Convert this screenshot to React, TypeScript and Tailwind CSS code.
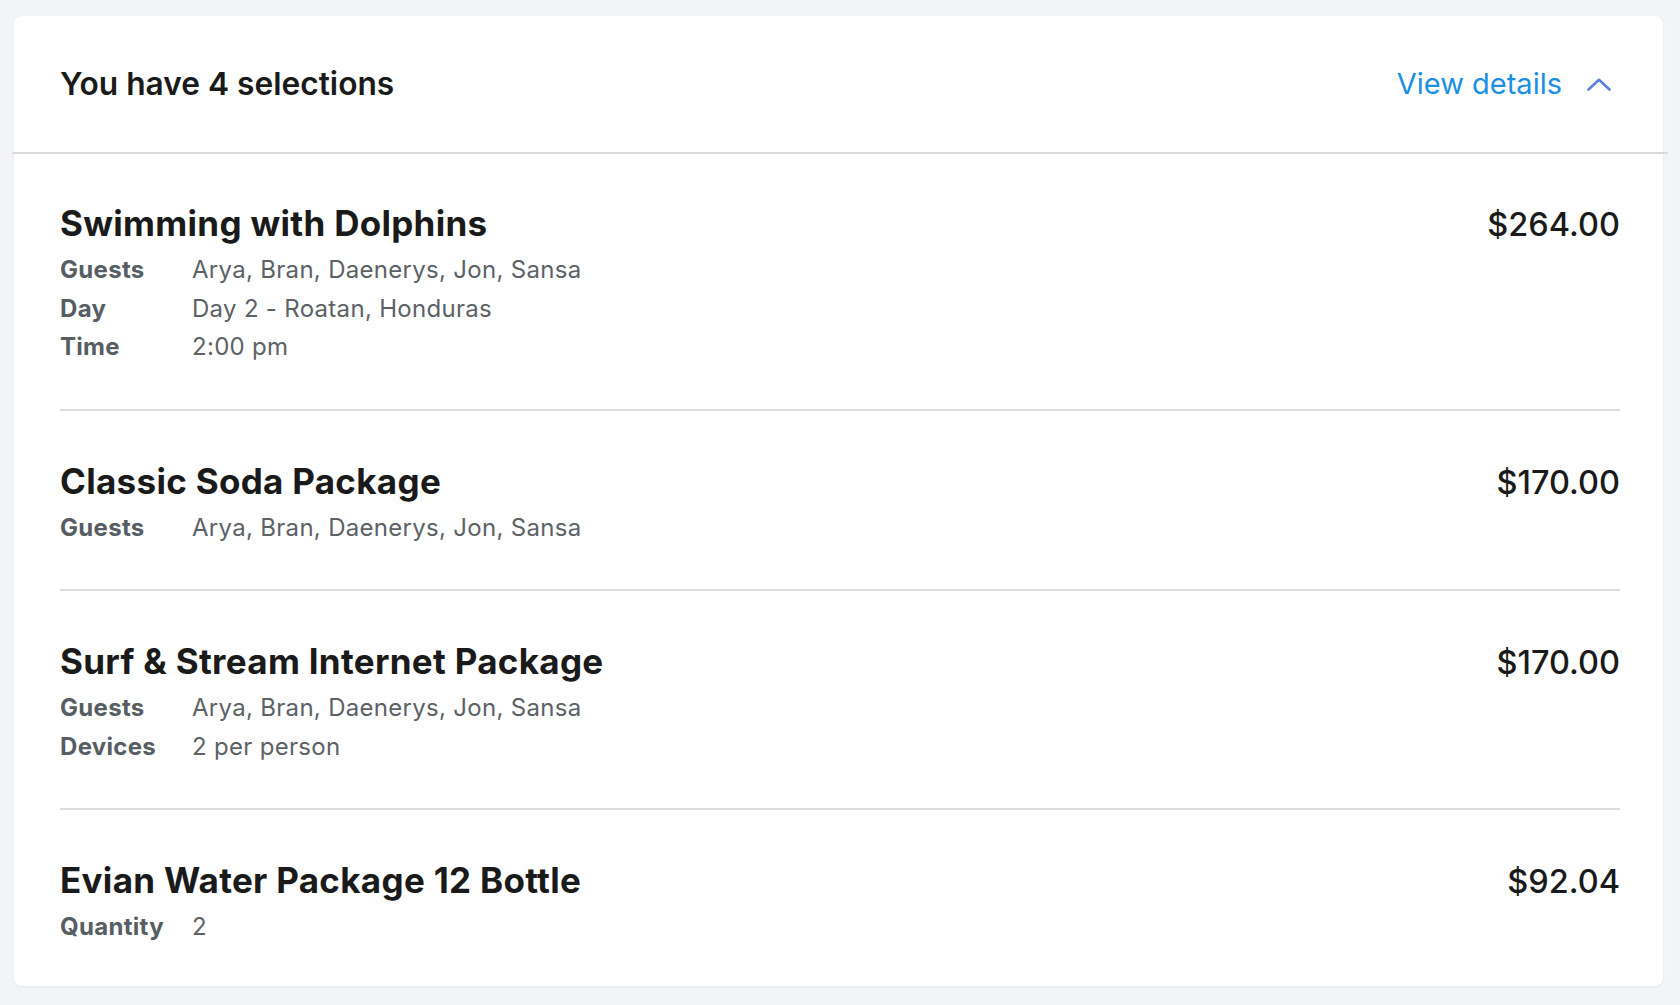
import React from "react";

type Row = { label: string; value: string };
type Item = { title: string; price: string; rows: Row[] };

const items: Item[] = [
  {
    title: "Swimming with Dolphins",
    price: "$264.00",
    rows: [
      { label: "Guests", value: "Arya, Bran, Daenerys, Jon, Sansa" },
      { label: "Day", value: "Day 2 - Roatan, Honduras" },
      { label: "Time", value: "2:00 pm" },
    ],
  },
  {
    title: "Classic Soda Package",
    price: "$170.00",
    rows: [{ label: "Guests", value: "Arya, Bran, Daenerys, Jon, Sansa" }],
  },
  {
    title: "Surf & Stream Internet Package",
    price: "$170.00",
    rows: [
      { label: "Guests", value: "Arya, Bran, Daenerys, Jon, Sansa" },
      { label: "Devices", value: "2 per person" },
    ],
  },
  {
    title: "Evian Water Package 12 Bottle",
    price: "$92.04",
    rows: [{ label: "Quantity", value: "2" }],
  },
];

function ItemBlock({ item, first, last }: { item: Item; first: boolean; last: boolean }) {
  const pad = first ? "pt-[49px]" : "pt-[50px]";
  const bottom = last ? "pb-[39px]" : "pb-[42px] border-b-2 border-[#dcdcdc]";
  return (
    <div className={`${pad} ${bottom}`}>
      <div className="flex items-baseline justify-between">
        <div className="text-[35px] leading-[40px] font-bold tracking-[0.3px] text-[#1a1a1a]">{item.title}</div>
        <div className="text-[32.5px] leading-[36px] font-medium text-[#1a1a1a]">{item.price}</div>
      </div>
      <div className="mt-[8px]">
        {item.rows.map((r) => (
          <div key={r.label} className="flex text-[24px] leading-[38.5px] tracking-[0.3px]">
            <div className="w-[132px] shrink-0 font-bold text-[#565d63]">{r.label}</div>
            <div className="text-[#5c6166]">{r.value}</div>
          </div>
        ))}
      </div>
    </div>
  );
}

export default function App() {
  return (
    <div
      className="min-h-screen bg-[#f3f4f8] pt-[16px] pl-[14px]"
      style={{ fontFamily: "Inter, Lato, sans-serif" }}
    >
      <div className="w-[1649px] rounded-[8px] bg-white shadow-[0_1px_3px_rgba(0,0,0,0.06)]">
        <div className="flex h-[136px] items-center justify-between pl-[46px] pr-[52px]">
          <div className="text-[31.7px] font-semibold text-[#1a1a1a]">You have 4 selections</div>
          <div className="flex items-center gap-[25px]">
            <span className="text-[29px] text-[#1b8fe6]">View details</span>
            <svg width="24" height="13" viewBox="0 0 24 13" fill="none">
              <path d="M1.5 11.5 L12 1.8 L22.5 11.5" stroke="#5a7fe0" strokeWidth="2.6" strokeLinecap="round" strokeLinejoin="round" />
            </svg>
          </div>
        </div>
        <div className="ml-[-2px] mr-[-5px] h-[2px] bg-[#dadada]" />
        <div className="pl-[46px] pr-[43px]">
          {items.map((it, i) => (
            <ItemBlock key={it.title} item={it} first={i === 0} last={i === items.length - 1} />
          ))}
        </div>
      </div>
    </div>
  );
}
